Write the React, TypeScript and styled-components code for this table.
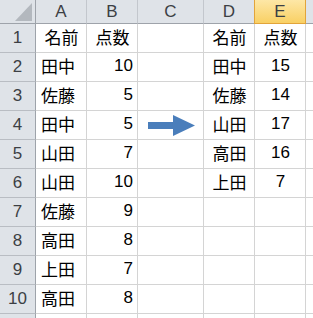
import React from 'react';
import styled, { createGlobalStyle } from 'styled-components';

const GlobalStyle = createGlobalStyle`
  html, body {
    margin: 0;
    padding: 0;
    background: #ffffff;
  }
`;

const Frame = styled.div`
  position: relative;
  width: 313px;
  height: 318px;
  overflow: hidden;
  background: #ffffff;
`;

const Sheet = styled.div`
  display: grid;
  grid-template-columns: 36px 51px 51px 66px 51px 51px 51px;
  grid-template-rows: 24px;
  grid-auto-rows: 29px;
  font-family: 'Liberation Sans', 'Noto Sans CJK JP', sans-serif;
  font-size: 17px;
  color: #000000;
`;

const Corner = styled.div`
  position: relative;
  box-sizing: border-box;
  background: #dfe3e8;
  border-right: 1px solid #9ea3aa;
  border-bottom: 1px solid #9ea3aa;

  &::after {
    content: '';
    position: absolute;
    right: 3px;
    bottom: 2px;
    width: 0;
    height: 0;
    border-left: 17px solid transparent;
    border-bottom: 18px solid #b3b8be;
  }
`;

const ColHeader = styled.div<{ $selected?: boolean }>`
  box-sizing: border-box;
  display: flex;
  align-items: center;
  justify-content: center;
  padding-top: 1px;
  color: #3c3f44;
  background: ${(p) =>
    p.$selected ? 'linear-gradient(#fde7a6, #f9d064)' : '#dfe3e8'};
  border-right: 1px solid ${(p) => (p.$selected ? '#e2a43a' : '#c3c7cd')};
  border-bottom: 1px solid ${(p) => (p.$selected ? '#e2a43a' : '#9ea3aa')};
  border-left: ${(p) => (p.$selected ? '1px solid #e2a43a' : 'none')};
  margin-left: ${(p) => (p.$selected ? '-1px' : '0')};
`;

const RowHeader = styled.div`
  box-sizing: border-box;
  display: flex;
  align-items: center;
  justify-content: center;
  color: #3c3f44;
  background: #dfe3e8;
  border-right: 1px solid #9ea3aa;
  border-bottom: 1px solid #b9bdc3;
`;

const Cell = styled.div<{ $align?: 'left' | 'center' | 'right' }>`
  box-sizing: border-box;
  display: flex;
  align-items: center;
  justify-content: ${(p) =>
    p.$align === 'right' ? 'flex-end' : p.$align === 'center' ? 'center' : 'flex-start'};
  padding: 0 4px 3px 5px;
  white-space: nowrap;
  border-right: 1px solid #d4d4d4;
  border-bottom: 1px solid #d4d4d4;
`;

const Arrow = styled.svg`
  position: absolute;
  left: 148px;
  top: 115px;
`;

type Row = [string, string, string, string];

const rows: Row[] = [
  ['田中', '10', '田中', '15'],
  ['佐藤', '5', '佐藤', '14'],
  ['田中', '5', '山田', '17'],
  ['山田', '7', '高田', '16'],
  ['山田', '10', '上田', '7'],
  ['佐藤', '9', '', ''],
  ['高田', '8', '', ''],
  ['上田', '7', '', ''],
  ['高田', '8', '', ''],
];

// F only peeks in at the right edge, row 11 at the bottom
const columns = ['A', 'B', 'C', 'D', 'E', ''];

const App: React.FC = () => {
  return (
    <Frame>
      <GlobalStyle />
      <Sheet>
        <Corner />
        {columns.map((c, i) => (
          <ColHeader key={i} $selected={c === 'E'}>
            {c}
          </ColHeader>
        ))}

        <RowHeader>1</RowHeader>
        <Cell $align="center">名前</Cell>
        <Cell $align="center">点数</Cell>
        <Cell />
        <Cell $align="center">名前</Cell>
        <Cell $align="center">点数</Cell>
        <Cell />

        {rows.map((r, i) => (
          <React.Fragment key={i}>
            <RowHeader>{i + 2}</RowHeader>
            <Cell>{r[0]}</Cell>
            <Cell $align="right">{r[1]}</Cell>
            <Cell />
            <Cell $align="center">{r[2]}</Cell>
            <Cell $align="center">{r[3]}</Cell>
            <Cell />
          </React.Fragment>
        ))}

        <RowHeader />
        <Cell />
        <Cell />
        <Cell />
        <Cell />
        <Cell />
        <Cell />
      </Sheet>

      <Arrow width="48" height="21" viewBox="0 0 48 21">
        <polygon points="0,7 25,7 25,0 47,10.5 25,21 25,14 0,14" fill="#4a7ebb" />
      </Arrow>
    </Frame>
  );
};

export default App;
